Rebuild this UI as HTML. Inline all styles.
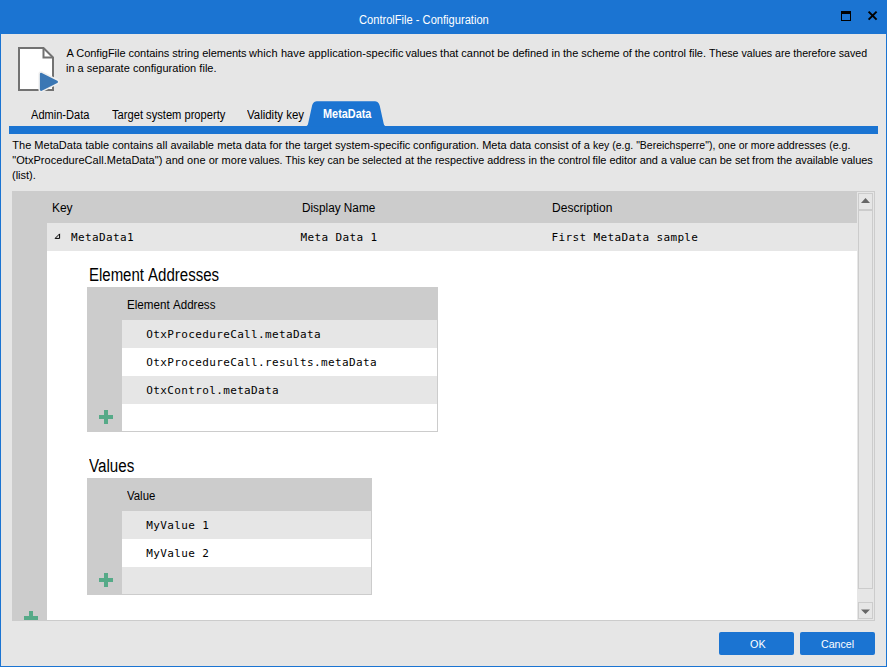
<!DOCTYPE html>
<html lang="en">
<head>
<meta charset="utf-8">
<title>ControlFile - Configuration</title>
<style>
html,body{margin:0;padding:0;}
body{width:887px;height:667px;overflow:hidden;position:relative;background:#e6e6e6;font-family:"Liberation Sans",sans-serif;color:#000;}
.a{position:absolute;}
.t{position:absolute;white-space:pre;line-height:16px;transform-origin:0 50%;color:#000;}
#win{left:0;top:0;width:887px;height:667px;box-sizing:border-box;border:1px solid #1b74d2;}
#inner{left:1px;top:34px;width:885px;height:632px;}
#title{left:0;top:0;width:887px;height:34px;background:#1b74d2;}
#tabbar{left:9px;top:126px;width:869px;height:8px;background:#1b74d2;}
#grid{left:12px;top:191px;width:863px;height:430px;box-sizing:border-box;background:#fff;overflow:hidden;}
.hdr{background:#ccc;}
.alt{background:#e6e6e6;}
.btn{background:#1b74d2;border-radius:2px;height:23px;width:75px;top:632px;}
.sbb{box-sizing:border-box;border:1px solid #ccc;background:#e6e6e6;}
</style>
</head>
<body>
<div class="a" id="inner"></div>
<div class="a" id="title"></div>
<div class="a" id="win"></div>

<!-- title buttons -->
<svg class="a" style="left:836px;top:6px" width="48" height="22" viewBox="0 0 48 22">
  <rect x="5.5" y="6.5" width="9" height="8" fill="none" stroke="#000" stroke-width="1"/>
  <rect x="5" y="5" width="10" height="3" fill="#000"/>
  <path d="M32.6 5.6 L40.6 13.6 M40.6 5.6 L32.6 13.6" stroke="#000" stroke-width="2" fill="none"/>
</svg>

<!-- document icon -->
<svg class="a" style="left:14px;top:42px" width="50" height="54" viewBox="0 0 50 54">
  <path d="M5 6 H29.5 L39 15.5 V48 H5 Z" fill="#fff" stroke="#727272" stroke-width="2" stroke-linejoin="miter"/>
  <path d="M29.5 6 V15.5 H39" fill="none" stroke="#727272" stroke-width="2"/>
  <path d="M27.2 32.1 L42.7 39.85 L27.2 47.6 Z" fill="#efefef" stroke="#efefef" stroke-width="5.6" stroke-linejoin="round"/>
  <path d="M27.2 32.1 L42.7 39.85 L27.2 47.6 Z" fill="#3b77b4" stroke="#3b77b4" stroke-width="2.6" stroke-linejoin="round"/>
</svg>

<!-- tabs -->
<div class="a" id="tabbar"></div>
<svg class="a" style="left:300px;top:98px" width="92" height="30" viewBox="0 0 92 30">
  <path d="M5 28.5 C7 28.2 7.7 27.5 8.2 25.3 L12 8 C12.9 4.6 14.5 3.3 18 3.3 H73.8 C77.3 3.3 78.9 4.6 79.8 8 L83.6 25.3 C84.1 27.5 84.8 28.2 86.8 28.5 Z" fill="#1b74d2"/>
</svg>

<!-- main grid -->
<div class="a" id="grid">
  <div class="a hdr" style="left:0;top:0;width:845px;height:32px"></div>
  <div class="a hdr" style="left:0;top:0;width:35px;height:430px"></div>
  <div class="a alt" style="left:35px;top:32px;width:810px;height:28px"></div>
  <!-- expander -->
  <svg class="a" style="left:40px;top:40px" width="10" height="10" viewBox="0 0 10 10"><path d="M7.6 2.9 V7.4 H3.1 Z" fill="none" stroke="#000" stroke-width="1"/></svg>

  <!-- inner grid 1 : page coords x87..438 y287..432 => local 75..426 , 96..241 -->
  <div class="a" style="left:75px;top:96px;width:351px;height:145px;box-sizing:border-box;border:1px solid #ccc;background:#fff;"></div>
  <div class="a hdr" style="left:75px;top:96px;width:351px;height:33px"></div>
  <div class="a hdr" style="left:75px;top:96px;width:35px;height:145px"></div>
  <div class="a alt" style="left:110px;top:129px;width:315px;height:28px"></div>
  <div class="a alt" style="left:110px;top:185px;width:315px;height:28px"></div>
  <svg class="a" style="left:87px;top:219px" width="14" height="14" viewBox="0 0 14 14"><path d="M5 0h4v5h5v4h-5v5h-4v-5h-5v-4h5z" fill="#56aa88"/></svg>

  <!-- inner grid 2 : page coords x87..372 y478..595 => local 75..360 , 287..404 -->
  <div class="a" style="left:75px;top:287px;width:285px;height:117px;box-sizing:border-box;border:1px solid #ccc;background:#fff;"></div>
  <div class="a hdr" style="left:75px;top:287px;width:285px;height:33px"></div>
  <div class="a hdr" style="left:75px;top:287px;width:35px;height:117px"></div>
  <div class="a alt" style="left:110px;top:320px;width:249px;height:28px"></div>
  <div class="a alt" style="left:110px;top:376px;width:249px;height:27px"></div>
  <svg class="a" style="left:87px;top:382px" width="14" height="14" viewBox="0 0 14 14"><path d="M5 0h4v5h5v4h-5v5h-4v-5h-5v-4h5z" fill="#56aa88"/></svg>

  <!-- new row plus of main grid (clipped) -->
  <svg class="a" style="left:12px;top:420px" width="14" height="14" viewBox="0 0 14 14"><path d="M5 0h4v5h5v4h-5v5h-4v-5h-5v-4h5z" fill="#56aa88"/></svg>

  <!-- scrollbar -->
  <div class="a" style="left:845px;top:0;width:18px;height:430px;background:#e6e6e6;box-sizing:border-box;border-top:1px solid #ccc;border-right:1px solid #ccc;border-bottom:1px solid #ccc;"></div>
  <div class="a sbb" style="left:846px;top:2px;width:15px;height:17px"></div>
  <div class="a sbb" style="left:846px;top:19px;width:15px;height:379px"></div>
  <div class="a sbb" style="left:846px;top:411px;width:15px;height:17px"></div>
  <svg class="a" style="left:849px;top:6px" width="10" height="7" viewBox="0 0 10 7"><path d="M0 6 L4.5 1 L9 6 Z" fill="#666"/></svg>
  <svg class="a" style="left:849px;top:417px" width="10" height="7" viewBox="0 0 10 7"><path d="M0 1.4 L9 1.4 L4.5 6 Z" fill="#666"/></svg>
  <div class="a" style="left:0;top:429px;width:863px;height:1px;background:#ccc"></div>
</div>

<!-- buttons -->
<div class="a btn" style="left:719px"></div>
<div class="a btn" style="left:800px"></div>

<span class="t" style='left:358.78px;top:11.84px;font-size:12px;color:#fff;transform:scaleX(0.9263);'>ControlFile - Configuration</span>
<span class="t" style='left:66.52px;top:45.39px;font-size:11px;letter-spacing:-0.025px;'>A ConfigFile contains string elements</span>
<span class="t" style='left:249.02px;top:45.39px;font-size:11px;letter-spacing:0.115px;'>which have application-specific</span>
<span class="t" style='left:405.51px;top:45.39px;font-size:11px;letter-spacing:-0.034px;'>values that cannot be defined</span>
<span class="t" style='left:551.51px;top:45.39px;font-size:11px;letter-spacing:-0.026px;'>in the scheme of the control file.</span>
<span class="t" style='left:708.72px;top:45.39px;font-size:11px;transform:scaleX(0.9646);'>These values are therefore saved</span>
<span class="t" style='left:12.31px;top:136.99px;font-size:11px;letter-spacing:0.012px;'>The MetaData table contains all available</span>
<span class="t" style='left:217.31px;top:136.99px;font-size:11px;letter-spacing:0.012px;'>meta data for the target system-specific</span>
<span class="t" style='left:413.01px;top:136.99px;font-size:11px;letter-spacing:0.004px;'>configuration. Meta data consist of a</span>
<span class="t" style='left:593.12px;top:136.99px;font-size:11px;transform:scaleX(0.9536);'>key (e.g. "Bereichsperre"), one or more</span>
<span class="t" style='left:777.41px;top:136.99px;font-size:11px;transform:scaleX(0.9689);'>addresses (e.g.</span>
<span class="t" style='left:12.31px;top:151.79px;font-size:11px;letter-spacing:0.039px;'>"OtxProcedureCall.MetaData") and one or more</span>
<span class="t" style='left:248.72px;top:151.79px;font-size:11px;transform:scaleX(0.9609);'>values. This key can be selected</span>
<span class="t" style='left:404.62px;top:151.79px;font-size:11px;transform:scaleX(0.9805);'>at the respective address in the control</span>
<span class="t" style='left:592.51px;top:151.79px;font-size:11px;letter-spacing:-0.043px;'>file editor and a value can be set</span>
<span class="t" style='left:752.12px;top:151.79px;font-size:11px;letter-spacing:-0.038px;'>from the available values</span>
<span class="t" style='left:65.91px;top:59.99px;font-size:11px;letter-spacing:0.026px;'>in a separate configuration file.</span>
<span class="t" style='left:30.58px;top:106.84px;font-size:12px;transform:scaleX(0.9224);'>Admin-Data</span>
<span class="t" style='left:112.08px;top:106.84px;font-size:12px;transform:scaleX(0.9287);'>Target system property</span>
<span class="t" style='left:246.78px;top:106.84px;font-size:12px;transform:scaleX(0.9536);'>Validity key</span>
<span class="t" style='left:322.58px;top:105.84px;font-size:12px;color:#fff;font-weight:700;transform:scaleX(0.9078);'>MetaData</span>
<span class="t" style='left:12.02px;top:166.59px;font-size:11px;'>(list).</span>
<span class="t" style='left:51.88px;top:199.84px;font-size:12px;'>Key</span>
<span class="t" style='left:302.38px;top:199.84px;font-size:12px;transform:scaleX(0.9804);'>Display Name</span>
<span class="t" style='left:552.08px;top:199.84px;font-size:12px;letter-spacing:0.031px;'>Description</span>
<span class="t" style='left:89.37px;top:263.16px;font-size:18px;line-height:24px;transform:scaleX(0.8321);'>Element</span>
<span class="t" style='left:147.77px;top:263.16px;font-size:18px;line-height:24px;transform:scaleX(0.8355);'>Addresses</span>
<span class="t" style='left:89.37px;top:453.76px;font-size:18px;line-height:24px;transform:scaleX(0.8428);'>Values</span>
<span class="t" style='left:127.28px;top:296.54px;font-size:12px;transform:scaleX(0.9707);'>Element</span>
<span class="t" style='left:172.88px;top:296.54px;font-size:12px;transform:scaleX(0.9639);'>Address</span>
<span class="t" style='left:127.08px;top:487.54px;font-size:12px;transform:scaleX(0.9506);'>Value</span>
<span class="t" style='left:749.60px;top:636.05px;font-size:11.4px;color:#fff;transform:scaleX(0.9471);'>OK</span>
<span class="t" style='left:820.80px;top:636.05px;font-size:11.4px;color:#fff;transform:scaleX(0.9332);'>Cancel</span>
<span class="t" style='left:71.02px;top:230.19px;font-size:11px;font-family:"DejaVu Sans Mono", "Liberation Mono", monospace;letter-spacing:0.365px;'>MetaData1</span>
<span class="t" style='left:300.62px;top:230.19px;font-size:11px;font-family:"DejaVu Sans Mono", "Liberation Mono", monospace;letter-spacing:0.365px;'>Meta Data 1</span>
<span class="t" style='left:551.62px;top:230.19px;font-size:11px;font-family:"DejaVu Sans Mono", "Liberation Mono", monospace;letter-spacing:0.365px;'>First MetaData sample</span>
<span class="t" style='left:146.31px;top:326.99px;font-size:11px;font-family:"DejaVu Sans Mono", "Liberation Mono", monospace;letter-spacing:0.365px;'>OtxProcedureCall.metaData</span>
<span class="t" style='left:146.31px;top:354.99px;font-size:11px;font-family:"DejaVu Sans Mono", "Liberation Mono", monospace;letter-spacing:0.365px;'>OtxProcedureCall.results.metaData</span>
<span class="t" style='left:146.31px;top:382.99px;font-size:11px;font-family:"DejaVu Sans Mono", "Liberation Mono", monospace;letter-spacing:0.365px;'>OtxControl.metaData</span>
<span class="t" style='left:146.31px;top:517.99px;font-size:11px;font-family:"DejaVu Sans Mono", "Liberation Mono", monospace;letter-spacing:0.365px;'>MyValue 1</span>
<span class="t" style='left:146.31px;top:545.99px;font-size:11px;font-family:"DejaVu Sans Mono", "Liberation Mono", monospace;letter-spacing:0.365px;'>MyValue 2</span>
</body>
</html>
